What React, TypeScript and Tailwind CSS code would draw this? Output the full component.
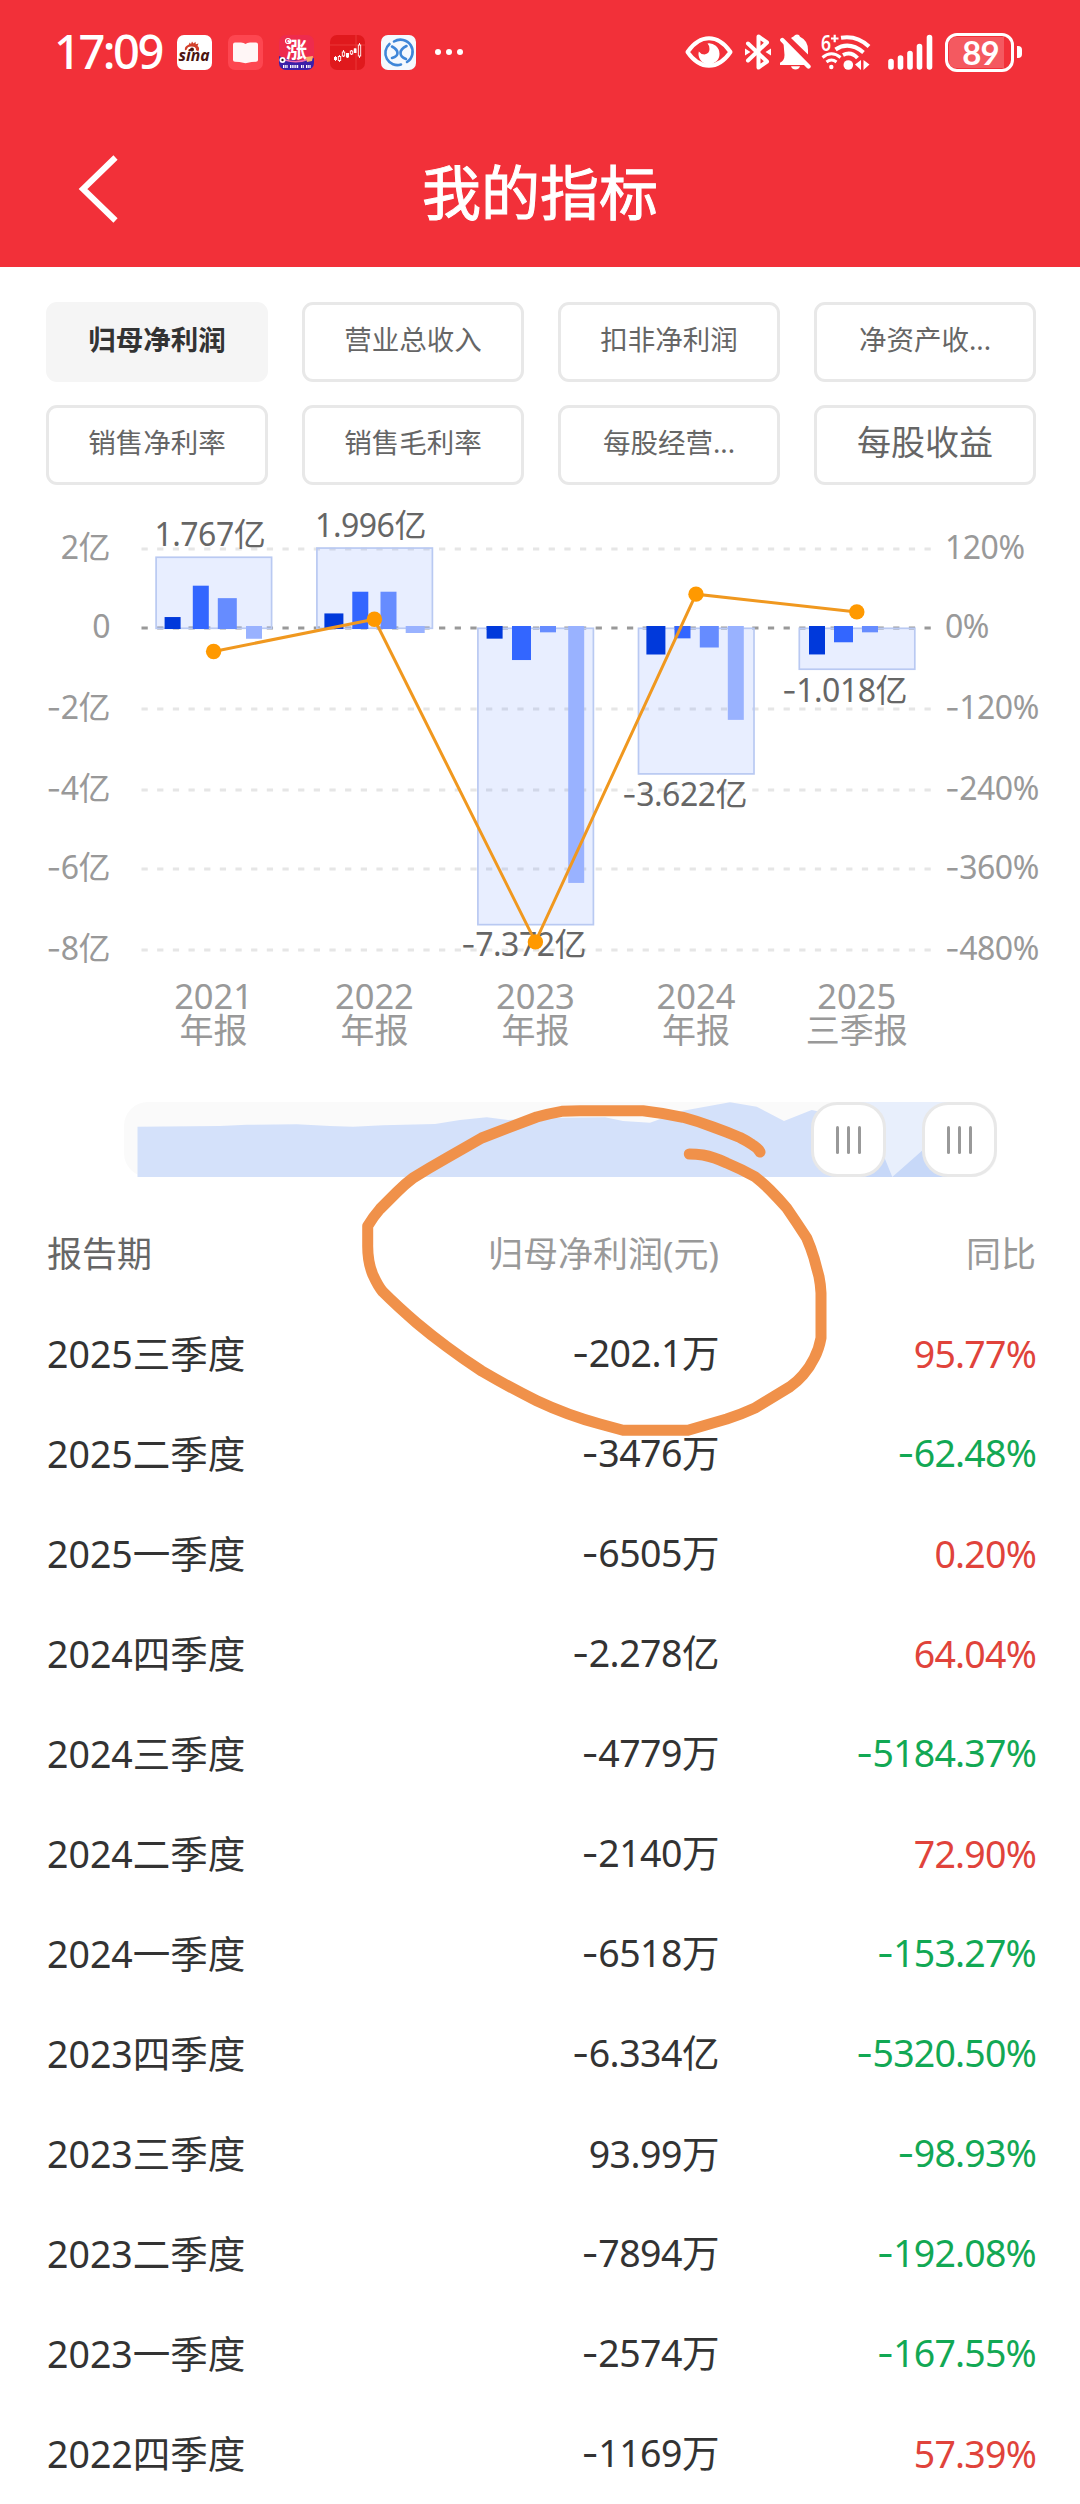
import clsx from "clsx";

const FONT = "font-['Noto_Sans','Noto_Sans_CJK_SC',sans-serif]";

const indicators = [
  { label: "归母净利润", active: true },
  { label: "营业总收入" },
  { label: "扣非净利润" },
  { label: "净资产收..." },
  { label: "销售净利率" },
  { label: "销售毛利率" },
  { label: "每股经营..." },
  { label: "每股收益", large: true },
];

const rows = [
  { period: "2025三季度", value: "-202.1万", change: "95.77%" },
  { period: "2025二季度", value: "-3476万", change: "-62.48%" },
  { period: "2025一季度", value: "-6505万", change: "0.20%" },
  { period: "2024四季度", value: "-2.278亿", change: "64.04%" },
  { period: "2024三季度", value: "-4779万", change: "-5184.37%" },
  { period: "2024二季度", value: "-2140万", change: "72.90%" },
  { period: "2024一季度", value: "-6518万", change: "-153.27%" },
  { period: "2023四季度", value: "-6.334亿", change: "-5320.50%" },
  { period: "2023三季度", value: "93.99万", change: "-98.93%" },
  { period: "2023二季度", value: "-7894万", change: "-192.08%" },
  { period: "2023一季度", value: "-2574万", change: "-167.55%" },
  { period: "2022四季度", value: "-1169万", change: "57.39%" },
];

const axis = [
  { y: 49, left: "2亿", right: "120%" },
  { y: 128, left: "0", right: "0%", zero: true },
  { y: 209, left: "-2亿", right: "-120%" },
  { y: 290, left: "-4亿", right: "-240%" },
  { y: 369, left: "-6亿", right: "-360%" },
  { y: 450, left: "-8亿", right: "-480%" },
];

// quarters: [x, width, value in 亿]
const years = [
  {
    year: "2021",
    report: "年报",
    x: 213.6,
    total: 1.767,
    label: "1.767亿",
    labelX: 209.8,
    labelY: 45.5,
    yoy: -35,
    quarters: [
      [164.6, 16, 0.28],
      [192.8, 16, 1.06],
      [217.8, 19, 0.75],
      [246, 16, -0.26],
    ],
  },
  {
    year: "2022",
    report: "年报",
    x: 374.4,
    total: 1.996,
    label: "1.996亿",
    labelX: 370.5,
    labelY: 37,
    yoy: 13,
    quarters: [
      [324.4, 19, 0.37],
      [352.3, 16, 0.91],
      [380.5, 16, 0.91],
      [405.7, 19, -0.1169],
    ],
  },
  {
    year: "2023",
    report: "年报",
    x: 535.4,
    total: -7.372,
    label: "-7.372亿",
    labelX: 523.5,
    labelY: 456,
    yoy: -468.5,
    quarters: [
      [486.6, 16, -0.2574],
      [512, 19, -0.7894],
      [540, 16, -0.1],
      [568.2, 16, -6.334],
    ],
  },
  {
    year: "2024",
    report: "年报",
    x: 696,
    total: -3.622,
    label: "-3.622亿",
    labelX: 684.5,
    labelY: 305.7,
    yoy: 50.5,
    quarters: [
      [646.4, 19, -0.6518],
      [674.5, 16, -0.25],
      [699.8, 19, -0.4779],
      [727.8, 16, -2.278],
    ],
  },
  {
    year: "2025",
    report: "三季报",
    x: 856.8,
    total: -1.018,
    label: "-1.018亿",
    labelX: 844.5,
    labelY: 201.7,
    yoy: 24,
    quarters: [
      [809, 16, -0.6505],
      [834, 19, -0.3476],
      [862, 16, -0.1],
    ],
  },
];

const QUARTER_COLORS = ["#0039db", "#3366ff", "#668cff", "#99b2ff"];

const valueY = (v: number) => 128.3 - v * 40.2;
const percentY = (p: number) => 128 - p * 0.67;

function SinaIcon() {
  return (
    <svg width="35" height="35" viewBox="0 0 35 35">
      <rect width="35" height="35" rx="7" fill="#fff" />
      <path
        d="M8 15.500c-.8-4.500 2.500-5 4-6l.5-2 1.500 1.500L15 6.500l1.500 2L18.500 6.800 18.800 9.300 21.500 8.500 20.500 11c2 1.200 2 3.500.8 5.500-3-2.500-9-3.500-13.300-1z"
        fill="#d2402a"
      />
      <ellipse cx="14.500" cy="14.500" rx="4.500" ry="3" fill="#fff" />
      <circle cx="15" cy="14.500" r="2" fill="#4a1a12" />
      <text
        x="1.500"
        y="26"
        textLength="31"
        lengthAdjust="spacingAndGlyphs"
        fontSize="16"
        fontWeight="700"
        fontStyle="italic"
        fill="#4a1410"
      >
        sina
      </text>
    </svg>
  );
}

function BookIcon() {
  return (
    <svg width="35" height="35" viewBox="0 0 35 35">
      <rect width="35" height="35" rx="7" fill="#fd4650" />
      <path
        d="M5 9.500q0-2 2-2h6q3 0 4.500 1.500Q19 7.500 22 7.500h6q2 0 2 2V25q0 1.500-2 1.800-5 .2-8 1-2.500.8-5 0-3-.8-8-1-2-.3-2-1.800z"
        fill="#fff6f6"
      />
    </svg>
  );
}

function RiseIcon() {
  return (
    <svg width="35" height="35" viewBox="0 0 35 35">
      <defs>
        <clipPath id="rise">
          <rect width="35" height="35" rx="7" />
        </clipPath>
      </defs>
      <g clipPath="url(#rise)">
        <rect width="35" height="35" fill="#ee2b4d" />
        <path d="M0 21q17 8 35 2v12H0z" fill="#3a1fa8" />
        <path d="M6 25q12 4 24-1" stroke="#f06bb0" strokeWidth="1.500" fill="none" />
        <circle cx="3.500" cy="25" r="3" fill="#fff" />
        <circle cx="3.500" cy="25" r="1.200" fill="#222" />
        <path d="M27 22l7-1-1 5-5 1z" fill="#f9b36a" />
        <circle cx="9" cy="6" r="2.500" stroke="#fff" strokeWidth="1.200" fill="none" />
        <text x="7" y="21.500" fontSize="21" fontWeight="700" fill="#fff">
          涨
        </text>
        <path d="M4 31.500h5M11 31.500h9M22 31.500h3M27 31.500h5" stroke="#fff" strokeWidth="3" strokeDasharray="1.400 .8" />
      </g>
    </svg>
  );
}

function CandleIcon() {
  return (
    <svg width="35" height="35" viewBox="0 0 35 35">
      <rect width="35" height="35" rx="7" fill="#e0191d" />
      <path d="M0 10h35M26 0v35" stroke="#ee4040" strokeWidth=".8" />
      <g stroke="#fff" strokeWidth=".9" fill="none">
        <path d="M5.500 21v5M9.500 20v7M13.500 15v7M17.500 18v5M21.500 15v5M25 13v5M29.500 8v15" />
        <rect x="8.300" y="21.500" width="2.400" height="4" fill="#e0191d" />
        <rect x="12.300" y="17" width="2.400" height="4" fill="#e0191d" />
        <rect x="20.300" y="16" width="2.400" height="3" fill="#e0191d" />
        <rect x="28.300" y="10" width="2.400" height="11" fill="#e0191d" />
      </g>
      <path d="M4 22h3v3H4zM16 18h3v4.500h-3zM23.800 13.500h2.700V18h-2.700z" fill="#fff" />
    </svg>
  );
}

function SwirlIcon() {
  return (
    <svg width="35" height="35" viewBox="0 0 35 35">
      <rect width="35" height="35" rx="7" fill="#f5f9fe" />
      <g fill="none" stroke="#3f86d8" strokeWidth="2.600" strokeLinecap="round">
        <path d="M13 6.500a12 12 0 0 1 13 20.500" />
        <path d="M8.500 9a12 12 0 0 0 11.500 20.500" />
        <path d="M11 11.500q5.500 3 5.500 6.500T11 23" />
        <path d="M25.500 11q-6 3-6 7t5.500 6" />
      </g>
    </svg>
  );
}

function EyeIcon() {
  return (
    <svg width="48" height="32" viewBox="0 0 48 32">
      <path
        d="M2.500 16Q12 2.300 24 2.300T45.500 16Q36 29.700 24 29.700T2.500 16z"
        fill="none"
        stroke="#fff"
        strokeWidth="4"
        strokeLinejoin="round"
      />
      <path
        d="M22.500 7.500A10.500 10.500 0 1 1 13.800 15.500Q16 18.500 19.500 18.500 24.500 17.500 24.500 13 24.500 9.500 22.500 7.500z"
        fill="#fff"
      />
    </svg>
  );
}

function BluetoothIcon() {
  return (
    <svg width="26" height="36" viewBox="0 0 26 36">
      <path
        d="M3 9.500L22 27.500 13.500 33.500V2.500L22 8.500 3 26.500"
        fill="none"
        stroke="#fff"
        strokeWidth="4"
        strokeLinecap="round"
        strokeLinejoin="round"
      />
      <path d="M0 14.500v7l5.500-3.500zM26 14.500v7L20.500 18z" fill="#fff" />
    </svg>
  );
}

function BellOffIcon() {
  return (
    <svg width="31" height="36" viewBox="0 0 31 36">
      <path d="M3.500 9L25 28.500V31H0v-2.300q4.500-2 4.500-7.700z" fill="#fff" />
      <path
        d="M11 4q1-1 2.500-1.500Q15 .5 17 .5q2.500 0 3 2.200Q28 6.500 28 16v4.500z"
        fill="#fff"
      />
      <path d="M11 32.200h9q-1.200 3.300-4.500 3.300T11 32.200z" fill="#fff" />
      <path d="M2.300 6L28.500 32.500" stroke="#fff" strokeWidth="4.400" strokeLinecap="round" />
    </svg>
  );
}

function WifiIcon() {
  return (
    <svg className="overflow-visible" width="50" height="38" viewBox="0 0 50 38">
      <text
        x="0"
        y="17.500"
        fontSize="21"
        fontWeight="600"
        fill="#fff"
        textLength="10"
        lengthAdjust="spacingAndGlyphs"
      >
        6
      </text>
      <path d="M10 5.500h7.500M13.700 1.700v7.600" stroke="#fff" strokeWidth="2.200" />
      <g fill="none" stroke="#fff" strokeWidth="4">
        <path d="M20 4.700Q36 2 48 13.500" />
        <path d="M14.500 16.500Q28 7.500 42.500 19.500" />
        <path d="M22 22Q30 18 36.500 25" />
      </g>
      <path d="M1.500 24.500q9-7.500 18 0M5.500 29q5-4 10 0" stroke="#fff" strokeWidth="3" fill="none" />
      <circle cx="10.300" cy="34" r="2.200" fill="#fff" />
      <circle cx="27.300" cy="32" r="4.800" fill="#fff" />
      <path d="M40 27v10l-6-5.500zM42.500 27v10l6-5.500z" fill="#fff" />
    </svg>
  );
}

function SignalIcon() {
  return (
    <svg width="46" height="36" viewBox="0 0 46 36">
      <path
        d="M3 27.500V33M12.500 24V33M22 19.500V33M31.500 12.500V33M41.500 3.500V33"
        stroke="#fff"
        strokeWidth="5.600"
        strokeLinecap="round"
      />
    </svg>
  );
}

function Battery() {
  return (
    <div className="flex items-center gap-[3px]">
      <div className="flex h-[39px] w-[69px] rounded-[12px] border-3 border-white p-px">
        <div className="flex h-full w-[55px] items-center justify-center rounded-l-[7px] bg-white/20 pl-2 font-['Lato','Noto_Sans',sans-serif] text-[33px] leading-none font-bold tracking-[-1px] text-white">
          89
        </div>
      </div>
      <div className="h-3 w-[5px] rounded-r-sm bg-white" />
    </div>
  );
}

function StatusBar() {
  return (
    <div className="flex h-[104px] items-center pr-[58px] pl-[54px] text-white">
      <div className="w-[123px] pb-0.5 text-[47px] leading-none font-medium tracking-[-2.5px]">
        17:09
      </div>
      <div className="flex items-center gap-4">
        <SinaIcon />
        <BookIcon />
        <RiseIcon />
        <CandleIcon />
        <SwirlIcon />
      </div>
      <div className="ml-[19px] flex gap-[5px]">
        <span className="size-1.5 rounded-full bg-white" />
        <span className="size-1.5 rounded-full bg-white" />
        <span className="size-1.5 rounded-full bg-white" />
      </div>
      <div className="ml-auto flex items-center">
        <EyeIcon />
        <div className="ml-3">
          <BluetoothIcon />
        </div>
        <div className="ml-[9px]">
          <BellOffIcon />
        </div>
        <div className="ml-2.5">
          <WifiIcon />
        </div>
        <div className="ml-[17px]">
          <SignalIcon />
        </div>
        <div className="ml-[11px]">
          <Battery />
        </div>
      </div>
    </div>
  );
}

function TitleBar() {
  return (
    <div className="grid h-[163px] grid-cols-[1fr_auto_1fr] items-start">
      <svg className="mt-[49px] ml-[78px]" width="44" height="72" viewBox="0 0 44 72">
        <path d="M37.500 4.500L5 36 37.500 67.500" fill="none" stroke="#fff" strokeWidth="6" />
      </svg>
      <h1 className="mt-[46px] text-[59px] leading-[84px] text-white [-webkit-text-stroke:1px_white]">
        我的指标
      </h1>
    </div>
  );
}

function IndicatorTabs() {
  return (
    <div className="grid grid-cols-4 gap-x-[34px] gap-y-[23px] pt-[35px] pr-[44px] pl-[46px]">
      {indicators.map(({ label, active, large }) => (
        <button
          key={label}
          className={clsx(
            "flex h-20 items-center justify-center rounded-[11px] border-3 leading-none whitespace-nowrap",
            active
              ? "border-[#f5f5f5] bg-[#f5f5f5] font-bold text-[#333]"
              : "border-[#e8e8e8] bg-white text-[#666]",
            large ? "pb-1.5 text-[34px]" : "pb-1 text-[27.5px]",
          )}
        >
          {label}
        </button>
      ))}
    </div>
  );
}

// the minus sign comes from Inter, whose hyphen is wider and sits higher
function SvgNumber({ value }: { value: string }) {
  if (!value.startsWith("-")) return <>{value}</>;
  return (
    <>
      <tspan fontFamily="Inter">-</tspan>
      {value.slice(1)}
    </>
  );
}

function SignedNumber({ value }: { value: string }) {
  if (!value.startsWith("-")) return <>{value}</>;
  return (
    <>
      <span className="font-['Inter']">-</span>
      {value.slice(1)}
    </>
  );
}

function ProfitChart() {
  const points = years.map((y) => `${y.x},${percentY(y.yoy)}`).join(" ");

  return (
    <svg
      className="block tracking-[-0.5px]"
      width="1080"
      height="588"
      viewBox="0 -15 1080 588"
      fontSize="32"
    >
      {axis.map(({ y, left, right, zero }) => (
        <g key={left}>
          <line
            x1="141.500"
            x2="931"
            y1={y}
            y2={y}
            stroke={zero ? "#999" : "#e6e6e6"}
            strokeWidth="3"
            strokeDasharray="6.260 9.400"
          />
          <text x="110" y={y + 10} textAnchor="end" fill="#999">
            <SvgNumber value={left} />
          </text>
          <text x="945" y={y + 10} fill="#999">
            <SvgNumber value={right} />
          </text>
        </g>
      ))}

      {years.map((y) => {
        const top = Math.min(valueY(y.total), valueY(0));
        const height = Math.abs(valueY(y.total) - valueY(0));
        return (
          <g key={y.year}>
            <rect
              x={y.x - 57.500}
              y={top}
              width="115.500"
              height={height}
              fill="#3366ff"
              fillOpacity=".115"
              stroke="#b9c9f2"
              strokeWidth="1.700"
            />
            {y.quarters.map(([x, width, value], i) => {
              const from = value > 0 ? valueY(value) : 126;
              const to = value > 0 ? 129 : valueY(value);
              return (
                <rect
                  key={x}
                  x={x}
                  y={from}
                  width={width}
                  height={to - from}
                  fill={QUARTER_COLORS[i]}
                />
              );
            })}
            <text x={y.labelX} y={y.labelY} textAnchor="middle" fill="#666">
              <SvgNumber value={y.label} />
            </text>
            <text textAnchor="middle" fill="#999" fontSize="34.500" letterSpacing="0">
              <tspan x={y.x} y="509">
                {y.year}
              </tspan>
              <tspan x={y.x} y="543" fontSize="34">
                {y.report}
              </tspan>
            </text>
          </g>
        );
      })}

      <polyline points={points} fill="none" stroke="#f0981f" strokeWidth="3" />
      {years.map((y) => (
        <circle key={y.year} cx={y.x} cy={percentY(y.yoy)} r="7.700" fill="#ff9900" />
      ))}
    </svg>
  );
}

function RangeHandle() {
  return (
    <div className="flex h-[75px] w-[75px] items-center justify-center gap-[7.5px] rounded-[26px] border-3 border-[#e8e8e8] bg-white">
      <span className="h-7 w-[3.5px] rounded-full bg-[#999]" />
      <span className="h-7 w-[3.5px] rounded-full bg-[#999]" />
      <span className="h-7 w-[3.5px] rounded-full bg-[#999]" />
    </div>
  );
}

function RangeSlider() {
  return (
    <div className="relative ml-[124px] h-[75px] w-[873px] rounded-[24px] bg-[#fafafa]">
      <svg className="absolute inset-0" width="873" height="75" viewBox="124 1102 873 75">
        <path
          d="M137.500 1126.700L220 1126 246.700 1124.700 296.700 1124.300 330 1126 353 1126.700 383 1125.300 435 1124 460 1120 486.700 1117.300 508 1120 540 1118 605 1117.300 623 1121 650 1122.700 683 1110.700 730 1102.300 756.700 1106.700 784 1121 811.700 1110 849 1118V1177H137.500z"
          fill="#d4e1fa"
        />
        <path d="M849 1102H959V1177H849z" fill="#e8effc" />
        <path d="M849 1112L870 1122 892.300 1177H849zM892.300 1177L922 1150.700 959 1118V1177z" fill="#c7d8f8" />
      </svg>
      <div className="absolute top-0 left-[687px]">
        <RangeHandle />
      </div>
      <div className="absolute top-0 left-[798px]">
        <RangeHandle />
      </div>
    </div>
  );
}

// hand drawn ring around the profit column header
function MarkerRing() {
  return (
    <svg
      className="pointer-events-none absolute top-[1090px] left-[350px]"
      width="490"
      height="360"
      viewBox="350 1090 490 360"
    >
      <path
        d="M760 1152Q758 1148 752 1144.500 747 1141 740 1137.500 727 1132 713 1127 697 1121 683 1117.300 663 1113 643 1110.700H580L561.700 1111.300Q549 1113.500 536.700 1117L481.700 1138 446.700 1158Q429 1168 413 1178 405 1184 397 1192L380 1209 Q373 1217 367.700 1226V1245Q367.500 1262 373 1275 378 1286 382.700 1291.700 398 1307 416.700 1323 431 1335 446.700 1346.700 463 1359 481.700 1371 509 1387 536.700 1400.700 567 1415 600 1424L623 1430.300H688L726.700 1419Q742 1414 755 1408L790 1386.700Q797 1382 803 1375 810 1367 814.300 1358 819 1349 821 1338V1293Q820.500 1284 819 1276.700L814 1258Q811 1248 806.700 1238 797 1223 786.700 1208 778 1198 770 1190 763 1183 755 1176.700 741 1169 726.700 1163 714 1157 703 1155 696 1154 689.300 1154"
        fill="none"
        stroke="#f0914a"
        strokeWidth="11"
        strokeLinecap="round"
        strokeLinejoin="round"
      />
    </svg>
  );
}

function ReportTable() {
  return (
    <div className="mt-[28px] pr-[44px] pl-[47px]">
      <div className="grid h-[99px] grid-cols-[290px_382px_1fr] items-center text-right text-[35px] text-[#999]">
        <div className="text-left text-[#666]">报告期</div>
        <div>归母净利润(元)</div>
        <div>同比</div>
      </div>
      {rows.map(({ period, value, change }) => (
        <div
          key={period}
          className="grid h-[100px] grid-cols-[290px_382px_1fr] items-center text-right text-[37.500px] text-[#333]"
        >
          <div className="text-left">{period}</div>
          <div className="tracking-[-0.5px]">
            <SignedNumber value={value} />
          </div>
          <div
            className={clsx(
              "tracking-[-0.8px]",
              change.startsWith("-") ? "text-[#12a854]" : "text-[#e0433b]",
            )}
          >
            <SignedNumber value={change} />
          </div>
        </div>
      ))}
    </div>
  );
}

export default function App() {
  return (
    <div className={clsx("relative h-[2504px] w-[1080px] overflow-hidden bg-white", FONT)}>
      <header className="h-[267px] bg-[#f23039]">
        <StatusBar />
        <TitleBar />
      </header>
      <IndicatorTabs />
      <ProfitChart />
      <div className="mt-[29px]">
        <RangeSlider />
      </div>
      <ReportTable />
      <MarkerRing />
    </div>
  );
}
